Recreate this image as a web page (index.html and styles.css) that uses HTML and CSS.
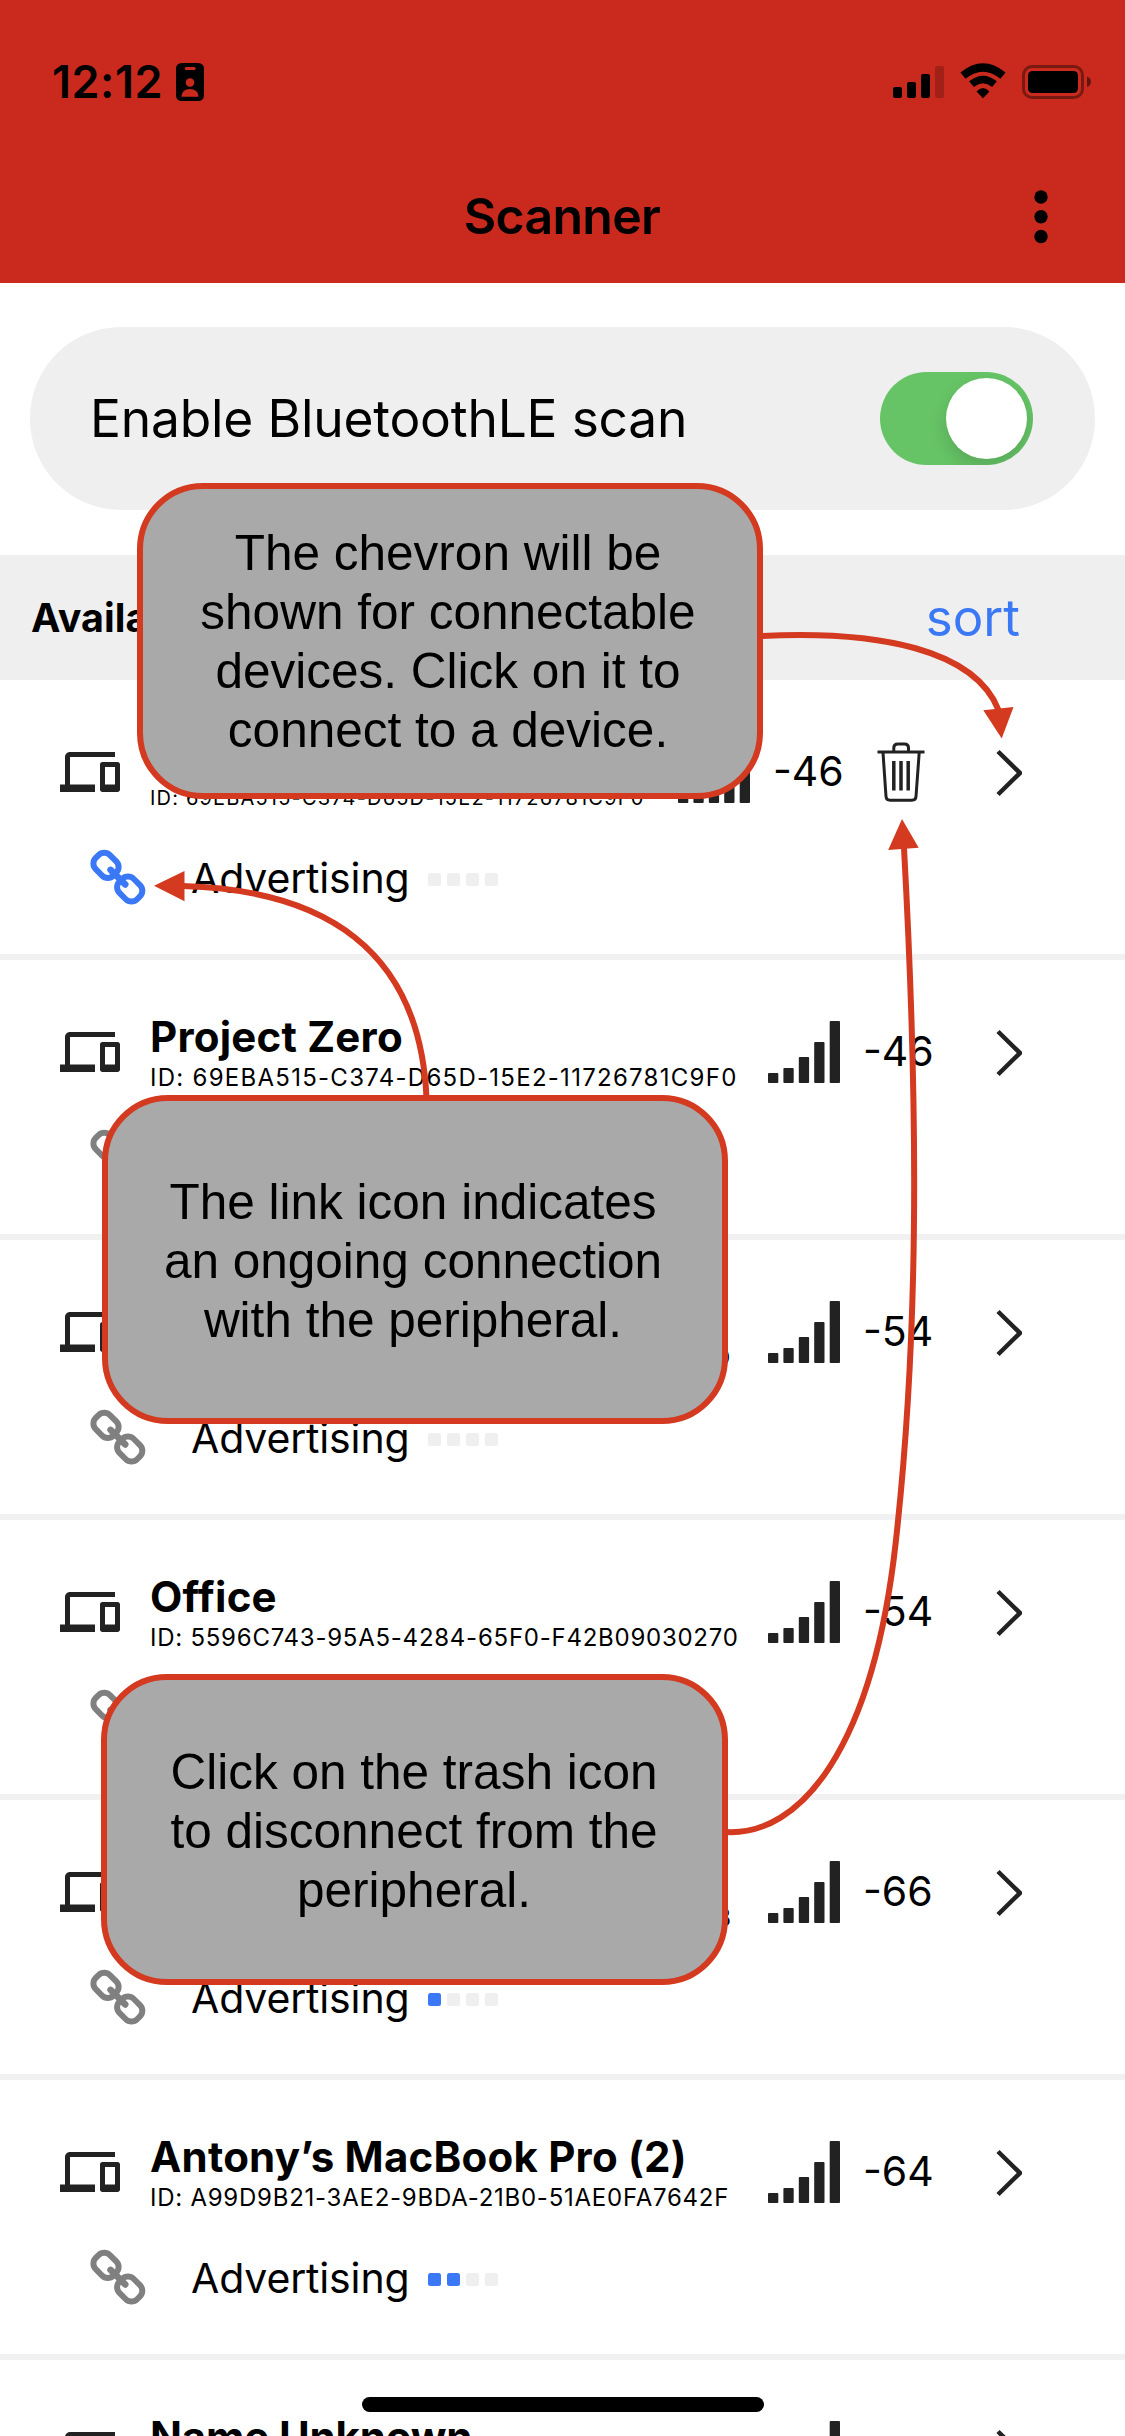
FILE: index.html
```html
<!DOCTYPE html>
<html lang="en">
<head>
<meta charset="utf-8">
<title>Scanner</title>
<link rel="stylesheet" href="styles.css">
</head>
<body>
<svg class="sprite" aria-hidden="true">
  <symbol id="devices" viewBox="0 0 24 24"><path d="M4 6h18V4H4c-1.1 0-2 .9-2 2v11H0v3h14v-3H4V6zm19 2h-6c-.55 0-1 .45-1 1v10c0 .55.45 1 1 1h6c.55 0 1-.45 1-1V9c0-.55-.45-1-1-1zm-1 9h-4v-7h4v7z"/></symbol>
  <symbol id="bars" viewBox="0 0 72 62"><rect x="0" y="52" width="10.3" height="10" rx="1"/><rect x="15.4" y="47" width="10.3" height="15" rx="1"/><rect x="30.8" y="36" width="10.3" height="26" rx="1"/><rect x="46.2" y="21" width="10.3" height="41" rx="1"/><rect x="61.7" y="0" width="10.3" height="62" rx="1"/></symbol>
  <symbol id="chevron" viewBox="0 0 26 48"><path d="M2 2.5 24 24 2 45.5" fill="none" stroke="currentColor" stroke-width="4.5"/></symbol>
  <symbol id="link" viewBox="0 0 60 60"><g fill="none" stroke="currentColor" stroke-width="6" stroke-linecap="round"><rect x="-12.5" y="-10" width="25" height="20" rx="8" transform="translate(18 18.3) rotate(45)"/><rect x="-12.5" y="-10" width="25" height="20" rx="8" transform="translate(41.7 42) rotate(45)"/><path d="M22.6 22.9 37.2 37.4" stroke-width="6.6"/></g></symbol>
  <symbol id="trash" viewBox="0 0 48 60"><g fill="none" stroke="currentColor" stroke-width="3"><path d="M.5 10H47.5M16.8 9V6q0-4 4-4h6.700q4 0 4 4v3M6 10.500 9 54.500q.3 3.800 4 3.800H35q3.700 0 4-3.800L42.200 10.500"/><path stroke-width="3.500" d="M16.800 19V48.500M24 19V48.500M31.200 19V48.500"/></g></symbol>
</svg>
<div class="screen">
  <header class="top">
    <div class="status">
      <span class="time">12:12</span>
      <svg class="badge" viewBox="0 0 28 38"><rect width="28" height="38" rx="5.500"/><g fill="#ca2a1e"><rect x="8.700" y="4" width="11" height="3" rx="1.500"/><circle cx="14" cy="19.500" r="4.300"/><path d="M5.500 33.800c0-5 3.500-7.800 8.500-7.800s8.500 2.800 8.500 7.800z"/></g></svg>
      <svg class="radio" viewBox="0 0 200 36">
        <rect x="0" y="23" width="9" height="11" rx="2"/><rect x="14" y="18" width="9" height="16" rx="2"/><rect x="28" y="10" width="9" height="24" rx="2"/><rect x="42" y="2" width="9" height="32" rx="2" opacity=".2"/>
        <g fill="none" stroke="#000"><path d="M70 11.700Q90 -4.700 110 11.700" stroke-width="8"/><path d="M78.500 20.200Q90 10.800 101.500 20.200" stroke-width="7.500"/></g><path d="M83.500 27.500Q90 20.500 96.500 27.500L90 34.200z"/>
        <rect x="130.500" y="2.500" width="59" height="31" rx="8.500" fill="none" stroke="#000" stroke-width="3" opacity=".4"/><rect x="135" y="7" width="50" height="22" rx="4.500"/><path d="M194 12.500q4 1.500 4 5.300t-4 5.300z" opacity=".5"/>
      </svg>
    </div>
    <div class="bar">
      <h1 class="title">Scanner</h1>
      <svg class="more" viewBox="0 0 14 54"><circle cx="7" cy="7" r="6.700"/><circle cx="7" cy="26.800" r="6.700"/><circle cx="7" cy="46.500" r="6.700"/></svg>
    </div>
  </header>

  <section class="scan"><span class="scan-label">Enable BluetoothLE scan</span><span class="toggle"><span class="knob"></span></span></section>

  <div class="list-head"><span class="list-title">Available devices</span><span class="sort">sort</span></div>

  <ul class="devices">
    <li class="device connected">
      <div class="main"><svg class="kind"><use href="#devices"/></svg><div class="label"><div class="name">Project Zero</div><div class="uid">ID: 69EBA515-C374-D65D-15E2-11726781C9F0</div></div><svg class="strength"><use href="#bars"/></svg><span class="rssi">-46</span><svg class="trash"><use href="#trash"/></svg><svg class="chevron"><use href="#chevron"/></svg></div>
      <div class="state"><svg class="link"><use href="#link"/></svg><span class="adv">Advertising</span><span class="dots"><i></i><i></i><i></i><i></i></span></div>
    </li>
    <li class="device">
      <div class="main"><svg class="kind"><use href="#devices"/></svg><div class="label"><div class="name">Project Zero</div><div class="uid loose">ID: 69EBA515-C374-D65D-15E2-11726781C9F0</div></div><svg class="strength"><use href="#bars"/></svg><span class="rssi">-46</span><svg class="chevron"><use href="#chevron"/></svg></div>
      <div class="state"><svg class="link"><use href="#link"/></svg><span class="adv">Advertising</span><span class="dots"><i></i><i></i><i></i><i></i></span></div>
    </li>
    <li class="device">
      <div class="main"><svg class="kind"><use href="#devices"/></svg><div class="label"><div class="name">Name Unknown</div><div class="uid">ID: 7C42E9A1-5D30-48F6-9B27-E3608F15724D</div></div><svg class="strength"><use href="#bars"/></svg><span class="rssi">-54</span><svg class="chevron"><use href="#chevron"/></svg></div>
      <div class="state"><svg class="link"><use href="#link"/></svg><span class="adv">Advertising</span><span class="dots"><i></i><i></i><i></i><i></i></span></div>
    </li>
    <li class="device">
      <div class="main"><svg class="kind"><use href="#devices"/></svg><div class="label"><div class="name">Office</div><div class="uid">ID: 5596C743-95A5-4284-65F0-F42B09030270</div></div><svg class="strength"><use href="#bars"/></svg><span class="rssi">-54</span><svg class="chevron"><use href="#chevron"/></svg></div>
      <div class="state"><svg class="link"><use href="#link"/></svg><span class="adv">Advertising</span><span class="dots"><i></i><i></i><i></i><i></i></span></div>
    </li>
    <li class="device">
      <div class="main"><svg class="kind"><use href="#devices"/></svg><div class="label"><div class="name">Name Unknown</div><div class="uid">ID: 2F84D1C6-7150-43E2-8B16-A04D5C72963B</div></div><svg class="strength"><use href="#bars"/></svg><span class="rssi">-66</span><svg class="chevron"><use href="#chevron"/></svg></div>
      <div class="state"><svg class="link"><use href="#link"/></svg><span class="adv">Advertising</span><span class="dots"><i class="on"></i><i></i><i></i><i></i></span></div>
    </li>
    <li class="device">
      <div class="main"><svg class="kind"><use href="#devices"/></svg><div class="label"><div class="name">Antony’s MacBook Pro (2)</div><div class="uid">ID: A99D9B21-3AE2-9BDA-21B0-51AE0FA7642F</div></div><svg class="strength"><use href="#bars"/></svg><span class="rssi">-64</span><svg class="chevron"><use href="#chevron"/></svg></div>
      <div class="state"><svg class="link"><use href="#link"/></svg><span class="adv">Advertising</span><span class="dots"><i class="on"></i><i class="on"></i><i></i><i></i></span></div>
    </li>
    <li class="device">
      <div class="main"><svg class="kind"><use href="#devices"/></svg><div class="label"><div class="name unknown">Name Unknown</div></div><svg class="strength"><use href="#bars"/></svg><span class="rssi">-74</span><svg class="chevron"><use href="#chevron"/></svg></div>
    </li>
  </ul>

  <svg class="arrows" viewBox="0 0 1125 2436">
    <g class="lines"><path d="M760 636C880 630 975 650 998.500 710"/><path d="M183 886C325 890 420 950 426.500 1098"/><path d="M726 1832C800 1836 873 1750 896 1540C917 1350 920 1140 904 848"/></g>
    <g class="heads"><path d="M983.300 710.300 1013.500 707 1001.700 738.500z"/><path d="M184.500 871V901.300L154 885.700z"/><path d="M888.200 850 918.700 847.800 902 819z"/></g>
  </svg>
  <div class="callout chevron-note">The chevron will be<br>shown for connectable<br>devices. Click on it to<br>connect to a device.</div>
  <div class="callout link-note">The link icon indicates<br>an ongoing connection<br>with the peripheral.</div>
  <div class="callout trash-note">Click on the trash icon<br>to disconnect from the<br>peripheral.</div>
  <div class="home"></div>
</div>
</body>
</html>
```
FILE: styles.css
```css
* { box-sizing: border-box; }
body { margin: 0; background: #fff; }
.sprite { position: absolute; width: 0; height: 0; }
.screen {
  position: relative;
  width: 1125px;
  height: 2436px;
  overflow: hidden;
  background: #fff;
  color: #000;
  font-family: Inter, "Liberation Sans", sans-serif;
}
svg { display: block; flex: none; overflow: visible; fill: currentColor; }

/* Header */
.top { height: 283px; background: #ca2a1e; padding-top: 52px; }
.status { display: flex; align-items: center; height: 60px; padding: 0 32px 0 52px; }
.time { width: 124px; font-size: 45px; font-weight: 600; letter-spacing: .5px; line-height: 60px; }
.badge { width: 28px; height: 38px; }
.radio { width: 200px; height: 36px; margin-left: auto; }
.bar { position: relative; display: flex; justify-content: center; height: 121px; margin-top: 44px; }
.title { margin: 0; padding-right: 1px; font-size: 50px; font-weight: 600; letter-spacing: -.7px; line-height: 120px; }
.more { position: absolute; right: 77px; top: 34px; width: 14px; height: 54px; }

/* Scan switch */
.scan {
  display: flex;
  align-items: center;
  justify-content: space-between;
  height: 183px;
  margin: 44px 30px 45px;
  padding: 0 62px 0 60px;
  border-radius: 91px;
  background: #efefef;
  font-size: 51.5px;
  letter-spacing: -.2px;
}
.scan-label { padding-bottom: 2px; }
.toggle { display: flex; justify-content: flex-end; width: 153px; height: 93px; padding: 6px; border-radius: 47px; background: #66c466; overflow: hidden; }
.knob { width: 81px; height: 81px; border-radius: 50%; background: #fff; box-shadow: 0 8px 18px rgba(0, 0, 0, .14); }

/* List */
.list-head { display: flex; align-items: center; justify-content: space-between; height: 125px; padding: 0 105px 0 31px; background: #efefef; }
.list-title { font-size: 39.5px; font-weight: 700; }
.sort { font-size: 51px; color: #3a78f6; }
.devices { margin: 0; padding: 0; list-style: none; }
.device { height: 280px; padding: 52px 103px 0 60px; border-bottom: 6px solid #f1f1f1; color: #222; }
.main { display: flex; align-items: center; height: 80px; }
.kind { width: 60px; height: 60px; margin-right: 30px; }
.label { flex: 1; min-width: 0; height: 80px; color: #000; white-space: nowrap; }
.name { font-size: 42px; font-weight: 700; line-height: 50px; letter-spacing: .22px; }
.name.unknown { letter-spacing: -.15px; }
.uid { font-size: 24px; line-height: 32px; letter-spacing: .75px; }
.uid.loose { letter-spacing: 1.27px; }
.connected .uid { font-size: 20px; line-height: 32px; letter-spacing: 1.18px; }
.strength { width: 72px; height: 62px; }
.rssi { width: 133px; margin-left: 23px; font-size: 41px; line-height: 79px; height: 80px; color: #000; }
.connected .rssi { width: 104px; }
.trash { width: 48px; height: 60px; margin-right: 71px; }
.chevron { width: 26px; height: 48px; margin-top: 2px; }
.state { display: flex; align-items: center; height: 60px; margin-top: 35px; padding-left: 28px; color: #000; }
.link { width: 60px; height: 60px; color: #808080; }
.connected .link { color: #3a78f6; }
.adv { width: 219px; margin-left: 43px; font-size: 41px; line-height: 60px; letter-spacing: -.15px; padding-top: 1px; }
.dots { display: flex; gap: 6px; margin-left: 18px; padding-top: 5px; }
.dots i { width: 13px; height: 13px; border-radius: 2.5px; background: #efefef; }
.dots .on { background: #3a78f6; }

/* Annotations drawn over the list */
.arrows { position: absolute; left: 0; top: 0; width: 1125px; height: 2436px; }
.lines { fill: none; stroke: #d33a20; stroke-width: 6; }
.heads { fill: #d33a20; }
.callout {
  position: absolute;
  padding-right: 4px;
  border: 6px solid #d33a20;
  border-radius: 66px;
  background: #a9a9a9;
  font-family: "Liberation Sans", Arial, sans-serif;
  font-size: 49.5px;
  line-height: 59px;
  text-align: center;
  white-space: nowrap;
}
.chevron-note { left: 137px; top: 483px; width: 626px; height: 316px; padding-top: 34px; }
.link-note { left: 102px; top: 1095px; width: 626px; height: 329px; padding-top: 71px; }
.trash-note { left: 101px; top: 1674px; width: 627px; height: 311px; padding: 62px 1px 0 0; }
.home { position: absolute; left: 362px; top: 2397px; width: 402px; height: 15px; border-radius: 8px; background: #000; }
```
